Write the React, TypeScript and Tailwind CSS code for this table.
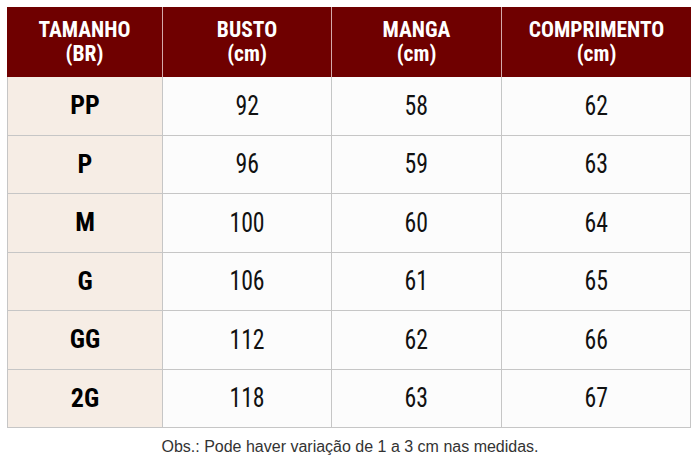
const headers = [
  ['TAMANHO', '(BR)'],
  ['BUSTO', '(cm)'],
  ['MANGA', '(cm)'],
  ['COMPRIMENTO', '(cm)'],
];

const rows: [string, number, number, number][] = [
  ['PP', 92, 58, 62],
  ['P', 96, 59, 63],
  ['M', 100, 60, 64],
  ['G', 106, 61, 65],
  ['GG', 112, 62, 66],
  ['2G', 118, 63, 67],
];

const cols = 'grid grid-cols-[156px_169px_170px_189px]';

export default function App() {
  return (
    <div className="w-[700px] h-[467px] bg-white pt-[7px] px-[7px] font-['Roboto_Condensed',sans-serif]">
      <div className="w-[684px]">
        <div className={`${cols} h-[70px] bg-[#6f0000] text-white`}>
          {headers.map(([a, b], i) => (
            <div
              key={a}
              className={`flex flex-col items-center justify-center text-[21.5px] font-bold leading-[24px] ${
                i < 3 ? 'border-r border-[#d4a9a9]' : ''
              }`}
            >
              <span>{a}</span>
              <span>{b}</span>
            </div>
          ))}
        </div>
        <div className="border-l border-[#c6c6c6]">
          {rows.map(([size, busto, manga, comp]) => (
            <div key={size} className={`${cols} h-[58.5px] -ml-px`}>
              <div className="flex items-center justify-center border-r border-b border-l border-[#c6c6c6] bg-[#f6ede5] text-[26px] font-bold text-black">
                {size}
              </div>
              {[busto, manga, comp].map((v, i) => (
                <div
                  key={i}
                  className="flex items-center justify-center border-r border-b border-[#c6c6c6] bg-[#fcfcfc] text-[27px] font-normal text-[#111]"
                >
                  <span className="inline-block scale-x-[0.88]">{v}</span>
                </div>
              ))}
            </div>
          ))}
        </div>
      </div>
      <p className="mt-[10px] text-center text-[16px] leading-[18px] text-[#333] font-['Liberation_Sans',Arial,sans-serif]">
        Obs.: Pode haver variação de 1 a 3 cm nas medidas.
      </p>
    </div>
  );
}
